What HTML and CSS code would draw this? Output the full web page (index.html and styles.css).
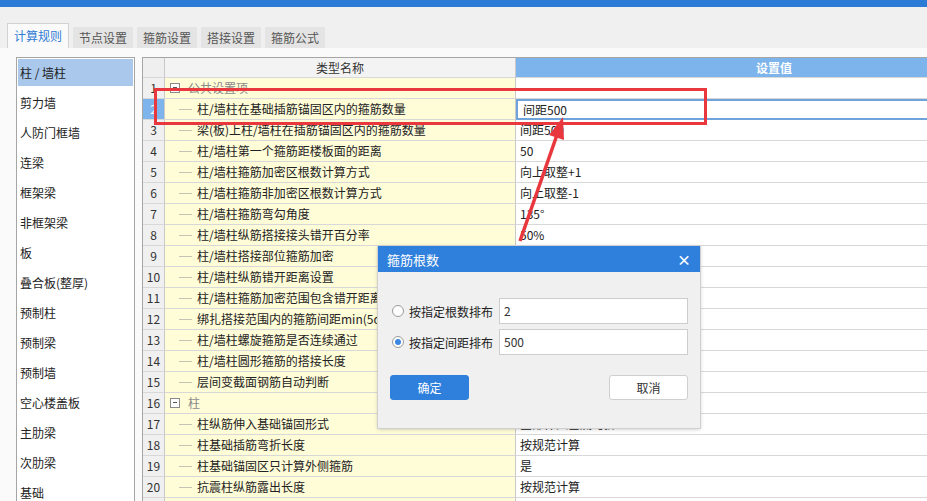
FILE: index.html
```html
<!DOCTYPE html>
<html lang="zh-CN">
<head>
<meta charset="utf-8">
<title>计算规则</title>
<link rel="stylesheet" href="styles.css">
</head>
<body>
<div class="topbar"></div>
<div class="tabs">
  <div class="tab active">计算规则</div>
  <div class="tab">节点设置</div>
  <div class="tab">箍筋设置</div>
  <div class="tab">搭接设置</div>
  <div class="tab">箍筋公式</div>
</div>
<div class="panel">
  <ul class="sidelist">
    <li class="selected">柱 / 墙柱</li>
    <li>剪力墙</li>
    <li>人防门框墙</li>
    <li>连梁</li>
    <li>框架梁</li>
    <li>非框架梁</li>
    <li>板</li>
    <li>叠合板(整厚)</li>
    <li>预制柱</li>
    <li>预制梁</li>
    <li>预制墙</li>
    <li>空心楼盖板</li>
    <li>主肋梁</li>
    <li>次肋梁</li>
    <li>基础</li>
  </ul>
  <div class="grid">
    <div class="row head">
      <div class="num"></div>
      <div class="name">类型名称</div>
      <div class="val">设置值</div>
    </div>
    <div class="row group">
      <div class="num">1</div>
      <div class="name"><span class="toggle"></span>公共设置项</div>
      <div class="val"></div>
    </div>
    <div class="row current">
      <div class="num">2</div>
      <div class="name"><span class="branch"></span>柱/墙柱在基础插筋锚固区内的箍筋数量</div>
      <div class="val">间距500</div>
    </div>
    <div class="row">
      <div class="num">3</div>
      <div class="name"><span class="branch"></span>梁(板)上柱/墙柱在插筋锚固区内的箍筋数量</div>
      <div class="val">间距500</div>
    </div>
    <div class="row">
      <div class="num">4</div>
      <div class="name"><span class="branch"></span>柱/墙柱第一个箍筋距楼板面的距离</div>
      <div class="val">50</div>
    </div>
    <div class="row">
      <div class="num">5</div>
      <div class="name"><span class="branch"></span>柱/墙柱箍筋加密区根数计算方式</div>
      <div class="val">向上取整+1</div>
    </div>
    <div class="row">
      <div class="num">6</div>
      <div class="name"><span class="branch"></span>柱/墙柱箍筋非加密区根数计算方式</div>
      <div class="val">向上取整-1</div>
    </div>
    <div class="row">
      <div class="num">7</div>
      <div class="name"><span class="branch"></span>柱/墙柱箍筋弯勾角度</div>
      <div class="val">135°</div>
    </div>
    <div class="row">
      <div class="num">8</div>
      <div class="name"><span class="branch"></span>柱/墙柱纵筋搭接接头错开百分率</div>
      <div class="val">50%</div>
    </div>
    <div class="row">
      <div class="num">9</div>
      <div class="name"><span class="branch"></span>柱/墙柱搭接部位箍筋加密</div>
      <div class="val"></div>
    </div>
    <div class="row">
      <div class="num">10</div>
      <div class="name"><span class="branch"></span>柱/墙柱纵筋错开距离设置</div>
      <div class="val"></div>
    </div>
    <div class="row">
      <div class="num">11</div>
      <div class="name"><span class="branch"></span>柱/墙柱箍筋加密范围包含错开距离</div>
      <div class="val"></div>
    </div>
    <div class="row">
      <div class="num">12</div>
      <div class="name"><span class="branch"></span>绑扎搭接范围内的箍筋间距min(5d,100)</div>
      <div class="val"></div>
    </div>
    <div class="row">
      <div class="num">13</div>
      <div class="name"><span class="branch"></span>柱/墙柱螺旋箍筋是否连续通过</div>
      <div class="val"></div>
    </div>
    <div class="row">
      <div class="num">14</div>
      <div class="name"><span class="branch"></span>柱/墙柱圆形箍筋的搭接长度</div>
      <div class="val"></div>
    </div>
    <div class="row">
      <div class="num">15</div>
      <div class="name"><span class="branch"></span>层间变截面钢筋自动判断</div>
      <div class="val"></div>
    </div>
    <div class="row group">
      <div class="num">16</div>
      <div class="name"><span class="toggle"></span>柱</div>
      <div class="val"></div>
    </div>
    <div class="row">
      <div class="num">17</div>
      <div class="name"><span class="branch"></span>柱纵筋伸入基础锚固形式</div>
      <div class="val">全部伸入基底弯折</div>
    </div>
    <div class="row">
      <div class="num">18</div>
      <div class="name"><span class="branch"></span>柱基础插筋弯折长度</div>
      <div class="val">按规范计算</div>
    </div>
    <div class="row">
      <div class="num">19</div>
      <div class="name"><span class="branch"></span>柱基础锚固区只计算外侧箍筋</div>
      <div class="val">是</div>
    </div>
    <div class="row">
      <div class="num">20</div>
      <div class="name"><span class="branch"></span>抗震柱纵筋露出长度</div>
      <div class="val">按规范计算</div>
    </div>
    <div class="row">
      <div class="num"></div>
      <div class="name"></div>
      <div class="val"></div>
    </div>
  </div>
</div>

<div class="annot-box"></div>
<svg class="annot-arrow" width="927" height="501" viewBox="0 0 927 501">
  <line x1="520" y1="241" x2="558" y2="132" stroke="#e8383d" stroke-width="3.5"/>
  <polygon points="563,117 549,135 564,140" fill="#e8383d"/>
</svg>

<div class="dialog">
  <div class="dlg-title"><span>箍筋根数</span><span class="close">×</span></div>
  <div class="dlg-body">
    <div class="opt">
      <span class="radio"></span>
      <span class="opt-label">按指定根数排布</span>
      <span class="field">2</span>
    </div>
    <div class="opt">
      <span class="radio checked"></span>
      <span class="opt-label">按指定间距排布</span>
      <span class="field">500</span>
    </div>
    <div class="btns">
      <span class="btn primary">确定</span>
      <span class="btn">取消</span>
    </div>
  </div>
</div>
</body>
</html>
```

FILE: styles.css
```css
* { box-sizing: border-box; }

body {
  margin: 0;
  width: 927px;
  height: 501px;
  overflow: hidden;
  position: relative;
  background: #f0f0f0;
  font-family: "Noto Sans CJK SC", "Microsoft YaHei", sans-serif;
  font-size: 12px;
  color: #222;
}

.topbar {
  height: 7px;
  background: #2b7bd7;
}

.tabs {
  display: flex;
  align-items: flex-end;
  gap: 4px;
  height: 41px;
  padding: 0 0 0 7px;
}

.tab {
  height: 21px;
  line-height: 21px;
  padding: 0 6px;
  background: #e4e4e4;
  color: #555;
  white-space: nowrap;
}

.tab.active {
  height: 25px;
  line-height: 24px;
  background: #fafafa;
  color: #2f7bd4;
  border: 1px solid #d2d2d2;
  border-bottom: none;
}

.panel {
  display: flex;
  gap: 7px;
  height: 453px;
  padding: 9px 0 0 16px;
  background: #fafafa;
}

.sidelist {
  flex: none;
  width: 119px;
  height: 460px;
  margin: 0;
  padding: 1px;
  list-style: none;
  background: #fff;
  border: 1px solid #a6a6a6;
}

.sidelist li {
  height: 27px;
  line-height: 27px;
  margin-bottom: 3px;
  padding-left: 2px;
  color: #222;
  white-space: nowrap;
}

.sidelist li.selected {
  background: #a9c8ec;
}

.grid {
  flex: 1;
  overflow: hidden;
  border-left: 1px solid #a6a6a6;
  border-top: 1px solid #a6a6a6;
  background: #fff;
}

.row {
  display: grid;
  grid-template-columns: 22px 351px 516px;
  height: 21px;
  line-height: 20px;
  white-space: nowrap;
}

.row > div {
  border-bottom: 1px solid #d8d8d8;
  overflow: hidden;
}

.num {
  background: #f0f0f0;
  border-right: 1px solid #c9c9c9;
  text-align: center;
  color: #333;
}

.name {
  background: #fffcd8;
  border-right: 1px solid #c9c9c9;
  display: flex;
  align-items: center;
}

.val {
  padding-left: 4px;
  background: #fff;
}

.row.head {
  height: 20px;
  line-height: 19px;
}

.row.head .name {
  background: #f3f3f3;
  justify-content: center;
  color: #333;
}

.row.head .val {
  background: #7db4ec;
  color: #fff;
  text-align: center;
  font-weight: bold;
  padding-left: 0;
}

.row.head .num {
  background: #efefef;
}

.branch {
  display: inline-block;
  width: 13px;
  margin: 0 5px 0 14px;
  border-top: 1px solid #c4c4b4;
}

.toggle {
  position: relative;
  display: inline-block;
  width: 10px;
  height: 10px;
  margin: 0 8px 0 5px;
  border: 1px solid #8a8a8a;
  background: #fff;
}

.toggle::after {
  content: "";
  position: absolute;
  left: 2px;
  top: 3px;
  width: 4px;
  border-top: 1px solid #555;
}

.row.group .name {
  color: #8a8a8a;
}

.row.current .num {
  background: #7db4ec;
  color: #fff;
}

.row.current .val {
  border: 2px solid #6ea3dc;
  padding-left: 5px;
  line-height: 17px;
}

.annot-box {
  position: absolute;
  left: 154px;
  top: 88px;
  width: 553px;
  height: 37px;
  border: 3px solid #e8383d;
}

.annot-arrow {
  position: absolute;
  left: 0;
  top: 0;
  pointer-events: none;
}

.dialog {
  position: absolute;
  left: 378px;
  top: 246px;
  width: 322px;
  height: 182px;
  background: #f0f0f0;
  box-shadow: 0 0 0 1px #d0d0d0, 0 1px 4px rgba(0, 0, 0, 0.25);
}

.dlg-title {
  height: 26px;
  display: flex;
  align-items: center;
  justify-content: space-between;
  padding: 0 9px 0 9px;
  background: #2f80dc;
  color: #fff;
  font-size: 13px;
}

.close {
  font-size: 14px;
  font-weight: bold;
  line-height: 1;
}

.dlg-body {
  padding: 26px 12px 0 14px;
}

.opt {
  display: flex;
  align-items: center;
  height: 26px;
  margin-bottom: 5px;
}

.radio {
  flex: none;
  width: 12px;
  height: 12px;
  margin-right: 5px;
  border-radius: 50%;
  border: 1px solid #9a9a9a;
  background: #fff;
  position: relative;
}

.radio.checked::after {
  content: "";
  position: absolute;
  left: 2px;
  top: 2px;
  width: 6px;
  height: 6px;
  border-radius: 50%;
  background: #3a87e0;
}

.opt-label {
  width: 90px;
  flex: none;
  color: #222;
  white-space: nowrap;
}

.field {
  flex: 1;
  height: 26px;
  line-height: 24px;
  padding-left: 4px;
  background: #fff;
  border: 1px solid #cdcdcd;
  color: #333;
}

.btns {
  display: flex;
  justify-content: space-between;
  margin: 20px 0 0 -2px;
}

.btn {
  width: 79px;
  height: 25px;
  line-height: 23px;
  text-align: center;
  border-radius: 3px;
  background: #fff;
  border: 1px solid #cfcfcf;
  color: #333;
}

.btn.primary {
  background: #2f80dc;
  border-color: #2f80dc;
  color: #fff;
}
```
